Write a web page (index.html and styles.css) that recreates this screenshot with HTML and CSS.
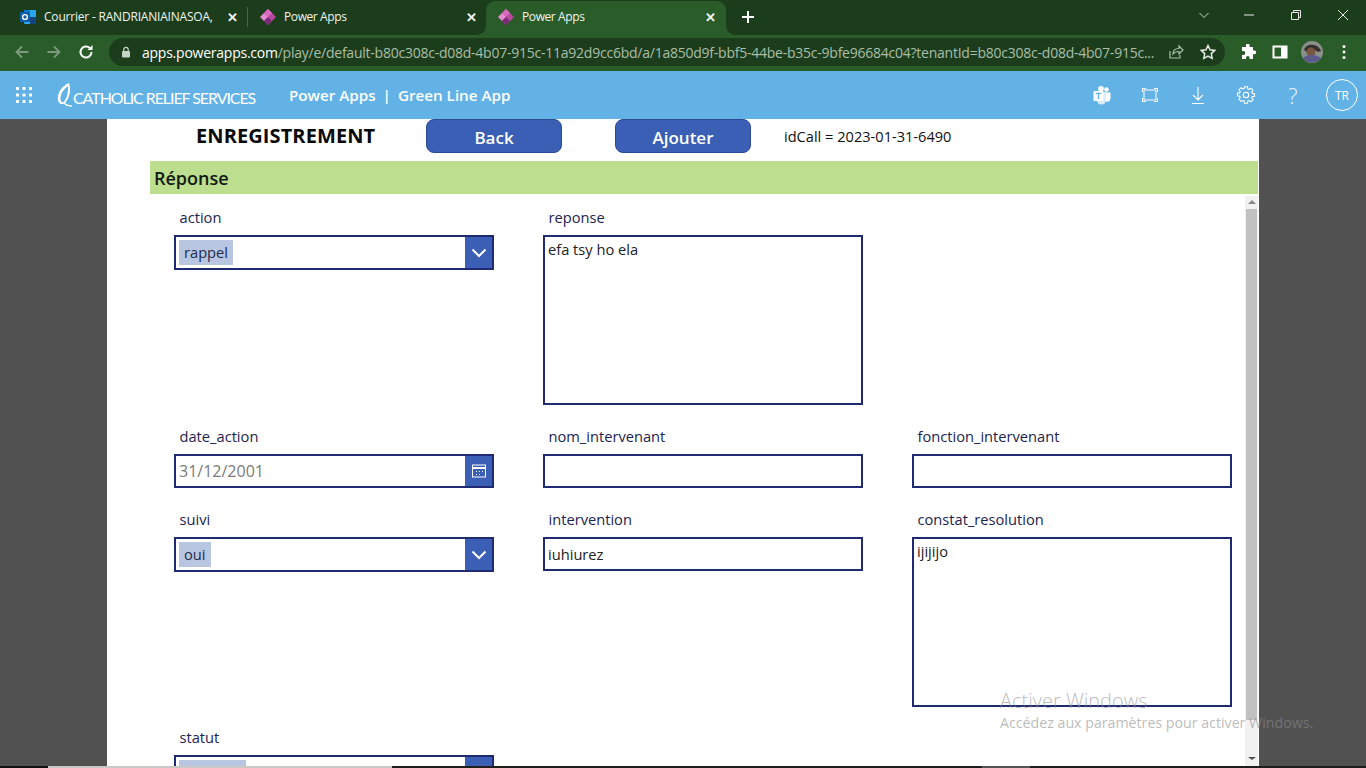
FILE: index.html
```html
<!DOCTYPE html>
<html lang="fr">
<head>
<meta charset="utf-8">
<title>Power Apps</title>
<link rel="stylesheet" href="styles.css">
</head>
<body>
<div class="tabs">
  <div class="tab tab-first">
    <svg class="favicon" viewBox="0 0 16 16"><rect x="4" y="1" width="12" height="14" rx="1" fill="#28a8ea"/><rect x="4" y="1" width="6" height="7" fill="#0078d4"/><rect x="10" y="8" width="6" height="7" fill="#14447d"/><rect x="0" y="3" width="10" height="10" rx="1" fill="#0f5cad"/><circle cx="5" cy="8" r="2.4" fill="none" stroke="#fff" stroke-width="1.4"/></svg>
    <span class="tab-title">Courrier - RANDRIANIAINASOA,</span>
    <span class="tab-close">✕</span>
  </div>
  <div class="tab-sep"></div>
  <div class="tab">
    <svg class="favicon" viewBox="0 0 16 16"><path d="M8 0l8 8-8 8-4-4 2-4-2-4z" fill="#b8489c"/><path d="M4 4l4 4-4 4-4-4z" fill="#e68ad0"/><path d="M8 0l4 4-4 4-4-4z" fill="#d86ac0"/><path d="M8 8l4 4-4 4-4-4z" fill="#7a2a78"/></svg>
    <span class="tab-title tab-title-short">Power Apps</span>
    <span class="tab-close">✕</span>
  </div>
  <div class="tab tab-active">
    <svg class="favicon" viewBox="0 0 16 16"><path d="M8 0l8 8-8 8-4-4 2-4-2-4z" fill="#b8489c"/><path d="M4 4l4 4-4 4-4-4z" fill="#e68ad0"/><path d="M8 0l4 4-4 4-4-4z" fill="#d86ac0"/><path d="M8 8l4 4-4 4-4-4z" fill="#7a2a78"/></svg>
    <span class="tab-title tab-title-short">Power Apps</span>
    <span class="tab-close">✕</span>
  </div>
  <svg class="newtab" viewBox="0 0 14 14"><path d="M7 1v12M1 7h12" stroke="#fff" stroke-width="2"/></svg>
  <div class="winctl">
    <svg viewBox="0 0 12 12"><path d="M1.5 4l4.5 4.5L10.500 4" fill="none" stroke="#c8d4c8" stroke-width="1"/></svg>
    <svg viewBox="0 0 12 12"><path d="M1 6h10" stroke="#e8e8e8" stroke-width="1"/></svg>
    <svg viewBox="0 0 12 12"><path d="M1.500 3.500h7v7h-7zM3.500 3.500v-2h7v7h-2" fill="none" stroke="#e8e8e8" stroke-width="1"/></svg>
    <svg viewBox="0 0 12 12"><path d="M1 1l10 10M11 1L1 11" stroke="#e8e8e8" stroke-width="1"/></svg>
  </div>
</div>
<div class="toolbar">
  <svg class="tb-icon" viewBox="0 0 16 16"><path d="M14.500 8h-12M8 2.500L2.500 8 8 13.500" fill="none" stroke="#7d9a7d" stroke-width="1.800"/></svg>
  <svg class="tb-icon" viewBox="0 0 16 16"><path d="M1.500 8h12M8 2.500L13.500 8 8 13.500" fill="none" stroke="#7d9a7d" stroke-width="1.800"/></svg>
  <svg class="tb-icon" viewBox="0 0 16 16"><path d="M13.500 8a5.500 5.500 0 1 1-1.600-3.900" fill="none" stroke="#fff" stroke-width="2"/><path d="M14.500 1v5h-5z" fill="#fff"/></svg>
  <div class="omnibox">
    <svg class="lock" viewBox="0 0 12 12"><rect x="2" y="5" width="8" height="6.500" rx="1" fill="#c5d3c5"/><path d="M3.800 5V3.500a2.200 2.200 0 0 1 4.400 0V5" fill="none" stroke="#c5d3c5" stroke-width="1.200"/></svg>
    <span class="url"><span class="url-host">apps.powerapps.com</span>/play/e/default-b80c308c-d08d-4b07-915c-11a92d9cc6bd/a/1a850d9f-bbf5-44be-b35c-9bfe96684c04?tenantId=b80c308c-d08d-4b07-915c...</span>
    <svg class="omni-icon" viewBox="0 0 16 16"><path d="M2 7v7h10v-3" fill="none" stroke="#a9bea9" stroke-width="1.200"/><path d="M5 10c0-4 3-5.500 6-5.500V2l4 4-4 4V7.500c-2.500 0-4.500.5-6 2.500z" fill="none" stroke="#a9bea9" stroke-width="1.200"/></svg>
    <svg class="omni-icon" viewBox="0 0 16 16"><path d="M8 1.500l2 4.300 4.700.6-3.400 3.200.9 4.700L8 12l-4.200 2.300.9-4.700L1.300 6.400 6 5.800z" fill="none" stroke="#e4ece4" stroke-width="1.500"/></svg>
  </div>
  <svg class="tb-ext" viewBox="0 0 16 16"><path d="M6 1.500a1.800 1.800 0 0 1 3.600 0V3H13v3.400h1.300a1.900 1.900 0 0 1 0 3.800H13V15H9.600v-1.300a1.800 1.800 0 0 0-3.600 0V15H2v-4h1.300a2 2 0 0 0 0-4H2V3h4z" fill="#fff"/></svg>
  <svg class="tb-side" viewBox="0 0 16 16"><rect x="1.500" y="2.500" width="13" height="11" fill="none" stroke="#fff" stroke-width="2"/><rect x="9" y="2.500" width="5.500" height="11" fill="#fff"/></svg>
  <svg class="tb-avatar" viewBox="0 0 22 22"><circle cx="11" cy="11" r="11" fill="#8b8f8a"/><path d="M3 9c2-7 14-7 17 1l-3 1c-3-3-8-3-11 0z" fill="#35302d"/><circle cx="10" cy="11" r="4.500" fill="#7a5544"/><path d="M2 17c4-4 13-4 18 0-4 6-14 6-18 0z" fill="#5a5a8c"/></svg>
  <svg class="tb-dots" viewBox="0 0 4 16"><circle cx="2" cy="2.500" r="1.500" fill="#fff"/><circle cx="2" cy="8" r="1.500" fill="#fff"/><circle cx="2" cy="13.500" r="1.500" fill="#fff"/></svg>
</div>
<header class="appbar">
  <svg class="waffle" viewBox="0 0 16 16"><g fill="#fff"><rect width="3" height="3" rx=".6"/><rect x="6.500" width="3" height="3" rx=".6"/><rect x="13" width="3" height="3" rx=".6"/><rect y="6.500" width="3" height="3" rx=".6"/><rect x="6.500" y="6.500" width="3" height="3" rx=".6"/><rect x="13" y="6.500" width="3" height="3" rx=".6"/><rect y="13" width="3" height="3" rx=".6"/><rect x="6.500" y="13" width="3" height="3" rx=".6"/><rect x="13" y="13" width="3" height="3" rx=".6"/></g></svg>
  <div class="brand">
    <svg class="brand-mark" viewBox="0 0 16 24"><path d="M12 0C5 3 0 10 1 17c.5 4 4 5 7 3 3-3 5.500-9 5-15-.2-2-.5-4-1-5z" fill="#fff"/><path d="M11 3C7 6 3 11 3.500 16.500c.5 3 2.500 3.500 4 1.500C10 15 11.500 9 11 3z" fill="#62b2e6"/><path d="M7 20c2 2 5 3 8 3" fill="none" stroke="#fff" stroke-width="1.300"/></svg>
    <span class="brand-text">CATHOLIC RELIEF SERVICES</span>
  </div>
  <div class="app-title">Power Apps<span class="app-bar-sep">|</span>Green Line App</div>
  <div class="app-actions">
    <svg class="act" viewBox="0 0 20 20"><circle cx="14.500" cy="4.500" r="2.300" fill="#fff"/><circle cx="9" cy="3.800" r="2.800" fill="#fff"/><path d="M12 7.500h6.500v6a3.500 3.500 0 0 1-6.500 1.500z" fill="#fff"/><path d="M5 7h9v8a4.500 4.500 0 0 1-9 0z" fill="#dcecf8"/><rect x="1.500" y="6" width="10" height="10" rx="1" fill="#fff"/><path d="M3.800 8.300h5.400M6.500 8.300v5.700" stroke="#62b2e6" stroke-width="1.300"/></svg>
    <svg class="act" viewBox="0 0 20 20"><path d="M4 5h12v10H4z" fill="none" stroke="#fff" stroke-width="1"/><path d="M2 3h4v1H3v3H2zM14 3h4v4h-1V4h-3zM2 13h1v3h3v1H2zM17 13h1v4h-4v-1h3z" fill="#fff"/></svg>
    <svg class="act" viewBox="0 0 20 20"><path d="M10 2v13M5 10l5 5 5-5M4 18.500h12" fill="none" stroke="#fff" stroke-width="1.100"/></svg>
    <svg class="act" viewBox="0 0 20 20"><circle cx="10" cy="10" r="2.700" fill="none" stroke="#fff" stroke-width="1.100"/><path d="M8.600 1.700h2.800l.4 2.100 1.400.6 1.800-1.200 2 2-1.200 1.800.6 1.400 2.100.4v2.400l-2.100.4-.6 1.400 1.200 1.800-2 2-1.800-1.200-1.400.6-.4 2.100H8.600l-.4-2.100-1.400-.6L5 16.300l-2-2 1.200-1.800-.6-1.400-2.100-.4V8.300l2.100-.4.6-1.400L3 4.700l2-2 1.800 1.200 1.400-.6z" fill="none" stroke="#fff" stroke-width="1.100"/></svg>
    <span class="help">?</span>
    <span class="avatar">TR</span>
  </div>
</header>
<main class="stage">
  <section class="canvas">
    <div class="topbar">
      <h1 class="page-title">ENREGISTREMENT</h1>
      <button class="btn btn-back">Back</button>
      <button class="btn">Ajouter</button>
      <span class="idcall">idCall = 2023-01-31-6490</span>
    </div>
    <h2 class="section-bar">Réponse</h2>
    <div class="scroller">
      <div class="form">
        <div class="field">
          <label class="label">action</label>
          <div class="control select"><span class="chip">rappel</span><span class="ctl-btn"><svg class="chev" viewBox="0 0 16 10"><path d="M1.500 1.500L8 8l6.500-6.500" fill="none" stroke="#fff" stroke-width="2"/></svg></span></div>
        </div>
        <div class="field">
          <label class="label">reponse</label>
          <div class="control area">efa tsy ho ela</div>
        </div>
        <div class="field"></div>

        <div class="field">
          <label class="label">date_action</label>
          <div class="control date"><span class="date-val">31/12/2001</span><span class="ctl-btn"><svg class="cal" viewBox="0 0 14 14"><rect x=".5" y="1" width="13" height="12" fill="none" stroke="#fff"/><path d="M.5 4h13" stroke="#fff" stroke-width="2"/><path d="M4 7h1v1H4zM7 7h1v1H7zM10 7h1v1h-1zM4 10h1v1H4zM7 10h1v1H7z" fill="#fff"/></svg></span></div>
        </div>
        <div class="field">
          <label class="label">nom_intervenant</label>
          <div class="control input"></div>
        </div>
        <div class="field">
          <label class="label">fonction_intervenant</label>
          <div class="control input"></div>
        </div>

        <div class="field">
          <label class="label">suivi</label>
          <div class="control select"><span class="chip">oui</span><span class="ctl-btn"><svg class="chev" viewBox="0 0 16 10"><path d="M1.500 1.500L8 8l6.500-6.500" fill="none" stroke="#fff" stroke-width="2"/></svg></span></div>
        </div>
        <div class="field">
          <label class="label">intervention</label>
          <div class="control input">iuhiurez</div>
        </div>
        <div class="field">
          <label class="label">constat_resolution</label>
          <div class="control area">ijijijo</div>
        </div>

        <div class="field field-last">
          <label class="label">statut</label>
          <div class="control select"><span class="chip chip-blank"></span><span class="ctl-btn"></span></div>
        </div>
      </div>
      <div class="scrollbar">
        <span class="arrow arrow-up"></span>
        <span class="thumb"></span>
        <span class="arrow arrow-down"></span>
      </div>
    </div>
  </section>
</main>
<div class="watermark">
  <div class="wm-title">Activer Windows</div>
  <div class="wm-sub">Accédez aux paramètres pour activer Windows.</div>
</div>
<div class="edge">
  <span class="edge-a"></span>
  <span class="edge-b"></span>
  <span class="edge-c"></span>
  <span class="edge-d"></span>
</div>
</body>
</html>
```

FILE: styles.css
```css
* { box-sizing: border-box; }
html, body { margin: 0; padding: 0; }
body {
  width: 1366px;
  height: 768px;
  overflow: hidden;
  display: flex;
  flex-direction: column;
  font-family: "Open Sans", "Liberation Sans", sans-serif;
  background: #515151;
  position: relative;
}
.tabs {
  height: 35px;
  flex: none;
  display: flex;
  align-items: center;
  background: #1c3d1c;
  padding-left: 8px;
  color: #fff;
  font-size: 12px;
}
.tab {
  width: 238px;
  height: 35px;
  display: flex;
  align-items: center;
  padding: 0 8px 2px 12px;
}
.tab-first { width: 239px; }
.tab-sep { width: 1px; height: 20px; background: #4a644a; margin-bottom: 2px; }
.tab-active {
  position: relative;
  width: 240px;
  height: 34px;
  margin-top: 1px;
  padding-right: 9px;
  padding-bottom: 3px;
  background: #2a5c2a;
  border-radius: 9px 9px 0 0;
}
.tab-active::before,
.tab-active::after {
  content: "";
  position: absolute;
  bottom: 0;
  width: 9px;
  height: 9px;
}
.tab-active::before {
  left: -9px;
  background: radial-gradient(circle at 0 0, transparent 8.5px, #2a5c2a 9px);
}
.tab-active::after {
  right: -9px;
  background: radial-gradient(circle at 100% 0, transparent 8.5px, #2a5c2a 9px);
}
.favicon { width: 16px; height: 16px; flex: none; margin-right: 8px; }
.tab-title { flex: 1; white-space: nowrap; overflow: hidden; color: #eef3ee; letter-spacing: -.2px; }
.tab-title-short { letter-spacing: -.4px; }
.tab-close { font-size: 13px; font-weight: 700; color: #f4f7f4; width: 14px; text-align: center; }
.newtab { width: 14px; height: 14px; margin-left: 15px; margin-bottom: 1px; position: relative; }
.winctl {
  margin-left: auto;
  display: flex;
  gap: 35px;
  padding-right: 17px;
  margin-bottom: 5px;
}
.winctl svg { width: 12px; height: 12px; flex: none; }
.winctl svg:first-child { margin-right: -2px; }
.toolbar {
  height: 36px;
  flex: none;
  display: flex;
  align-items: center;
  background: #2a5c2a;
  padding: 0 0 2px 14px;
}
.tb-icon { width: 16px; height: 16px; flex: none; margin-right: 16px; }
.omnibox {
  width: 1116px;
  height: 28px;
  margin-left: -1px;
  flex: none;
  background: #1c3d1c;
  border-radius: 14px;
  display: flex;
  align-items: center;
  padding-left: 11px;
}
.lock { width: 12px; height: 12px; flex: none; margin-right: 10px; }
.url {
  flex: none;
  width: 1018px;
  white-space: nowrap;
  overflow: hidden;
  font-size: 14px;
  letter-spacing: -.24px;
  color: #a9bea9;
}
.url-host { color: #fff; }
.omni-icon { width: 16px; height: 16px; flex: none; margin-left: 8px; margin-right: 8px; }
.tb-ext { width: 16px; height: 16px; flex: none; margin-left: 15px; margin-right: 16px; }
.tb-side { width: 16px; height: 16px; flex: none; margin-right: 13px; }
.tb-avatar { width: 22px; height: 22px; flex: none; margin-right: 19px; }
.tb-dots { width: 4px; height: 16px; flex: none; }
.appbar {
  height: 48px;
  flex: none;
  display: flex;
  align-items: center;
  background: #62b2e6;
  color: #fff;
}
.waffle { width: 16px; height: 16px; flex: none; margin-left: 16px; }
.brand { display: flex; align-items: flex-end; margin-left: 25px; width: 232px; flex: none; height: 26px; }
.brand-mark { width: 16px; height: 24px; flex: none; margin-bottom: 1px; }
.brand-text {
  font-family: "Lato", sans-serif;
  font-weight: 400;
  font-size: 16px;
  line-height: 20px;
  letter-spacing: -1.07px;
  white-space: nowrap;
}
.app-title { font-size: 15.2px; font-weight: 600; white-space: nowrap; margin-bottom: 1px; }
.app-bar-sep { margin: 0 7px; }
.app-actions { margin-left: auto; display: flex; align-items: center; }
.act { width: 20px; height: 20px; flex: none; margin-right: 28px; }
.help { font-size: 22px; font-weight: 300; width: 14px; text-align: center; margin-right: 26px; margin-left: 2px; color: #eaf5fc; }
.avatar {
  width: 32px;
  height: 32px;
  border: 1px solid #fff;
  border-radius: 50%;
  display: flex;
  align-items: center;
  justify-content: center;
  font-size: 12px;
  margin-right: 8px;
}
.stage { flex: 1; min-height: 0; padding-left: 107px; overflow: hidden; }
.canvas {
  width: 1152px;
  height: 100%;
  background: #fff;
  display: flex;
  flex-direction: column;
  overflow: hidden;
}
.topbar { height: 42px; flex: none; display: flex; align-items: flex-start; padding-left: 89px; }
.page-title {
  width: 230px;
  margin: 3px 0 0;
  font-size: 20px;
  line-height: 27px;
  font-weight: 700;
  color: #0a0a0a;
  letter-spacing: .1px;
}
.btn {
  width: 136px;
  height: 34px;
  border: 1px solid #2a4a96;
  border-radius: 8px;
  background: #3a5fb4;
  color: #fff;
  font: 600 17px/1 "Open Sans", sans-serif;
  padding: 2px 0 0;
}
.btn-back { margin-right: 53px; }
.idcall { margin: 7px 0 0 33px; font-size: 14.6px; line-height: 20px; color: #111; }
.section-bar {
  flex: none;
  height: 33px;
  margin: 0 1px 0 43px;
  padding-left: 4px;
  background: #bddd8f;
  font-size: 18px;
  line-height: 34px;
  font-weight: 600;
  color: #101a10;
}
.scroller { flex: 1; min-height: 0; display: flex; overflow: hidden; }
.form {
  flex: 1;
  display: grid;
  grid-template-columns: repeat(3, 320px);
  column-gap: 49px;
  row-gap: 22px;
  align-content: start;
  padding: 14px 0 0 67px;
}
.field { display: flex; flex-direction: column; }
.field-last { margin-top: -1px; }
.label { height: 27px; flex: none; padding-left: 5.5px; font-size: 14.67px; line-height: 18px; color: #1d2450; }
.control {
  border: 2px solid #1e2a72;
  background: #fff;
  font-size: 14.67px;
  line-height: 20px;
  color: #222;
  display: flex;
}
.select { height: 35px; flex: none; }
.input, .date { height: 34px; flex: none; }
.area { height: 170px; flex: none; padding: 2px 3px; }
.input { padding: 5px 3px; }
.chip {
  margin: 3px 0 3px 3px;
  padding: 2px 5px;
  height: 25px;
  background: #b8c6e2;
  color: #222c4a;
}
.chip-blank { width: 67px; }
.date-val { padding: 5px 3px; font-size: 16px; color: #7a7a7a; }
.ctl-btn {
  margin-left: auto;
  width: 27px;
  background: #3a5fb4;
  display: flex;
  align-items: center;
  justify-content: center;
}
.chev { width: 16px; height: 10px; }
.cal { width: 14px; height: 14px; }
.scrollbar {
  flex: none;
  width: 13px;
  margin: 2px 1px 0 0;
  background: #f1f1f1;
  display: flex;
  flex-direction: column;
  align-items: center;
}
.arrow { flex: none; width: 0; height: 0; border-left: 4px solid transparent; border-right: 4px solid transparent; }
.arrow-up { border-bottom: 4px solid #8a8a8a; margin: 4px 0 5px; }
.arrow-down { border-top: 3px solid #505050; margin: 5px 0 0; }
.thumb { width: 11px; height: 511px; flex: none; background: #c1c1c1; margin-bottom: 32px; }
.watermark {
  position: absolute;
  left: 1000px;
  top: 687px;
  color: rgba(140, 140, 140, .6);
  pointer-events: none;
  white-space: nowrap;
}
.wm-title { font-size: 20px; line-height: 27px; font-weight: 300; }
.wm-sub { font-size: 14.2px; line-height: 19px; margin-top: -1px; }
.edge {
  position: absolute;
  left: 0;
  right: 0;
  bottom: 0;
  height: 2px;
  display: flex;
  background: #1f1e1a;
}
.edge-a { width: 48px; background: #111; }
.edge-b { width: 344px; background: #c8c8c4; }
.edge-c { width: 590px; }
.edge-d { width: 48px; background: #555; }
```
